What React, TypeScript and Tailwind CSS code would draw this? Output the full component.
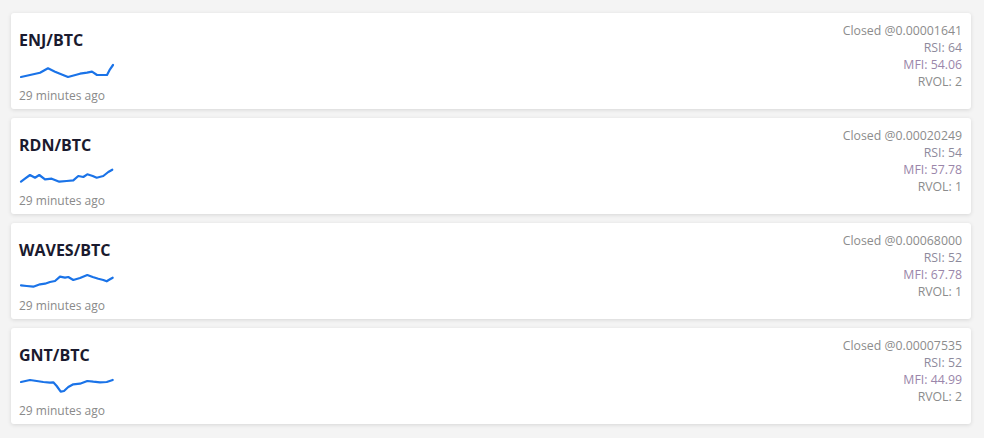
import React from "react";

type Item = {
  pair: string;
  closed: string;
  rsi: string;
  mfi: string;
  rvol: string;
  points: [number, number][];
};

const items: Item[] = [
  {
    pair: "ENJ/BTC",
    closed: "0.00001641",
    rsi: "64",
    mfi: "54.06",
    rvol: "2",
    points: [
      [2, 18], [11, 16], [21, 13.7], [29, 9.3], [36, 12.7], [49, 18], [61, 14.7],
      [68, 13.7], [73, 12.7], [78, 16], [84, 16], [88, 16], [91, 10.3], [94, 6],
    ],
  },
  {
    pair: "RDN/BTC",
    closed: "0.00020249",
    rsi: "54",
    mfi: "57.78",
    rvol: "1",
    points: [
      [2, 17.7], [6, 14.7], [11, 11], [16, 13.7], [20.3, 11], [26, 15.3], [32.7, 14.7],
      [40.3, 17.7], [47.7, 17], [54.3, 16.3], [59.3, 12], [64.3, 13], [68.3, 10.3],
      [73.7, 12], [77.7, 13.7], [84.3, 12], [89.3, 8], [93.3, 5.7],
    ],
  },
  {
    pair: "WAVES/BTC",
    closed: "0.00068000",
    rsi: "52",
    mfi: "67.78",
    rvol: "1",
    points: [
      [2, 16.3], [7.7, 17], [14.3, 17.7], [21, 15.3], [26, 14.7], [31, 13], [36, 12],
      [41, 7.7], [46, 8.7], [49.3, 8], [54.3, 11], [61, 9], [68.3, 6], [73.7, 8],
      [79.3, 9.7], [84.3, 11], [87.7, 12.3], [91, 10.3], [93.7, 8.7],
    ],
  },
  {
    pair: "GNT/BTC",
    closed: "0.00007535",
    rsi: "52",
    mfi: "44.99",
    rvol: "2",
    points: [
      [2, 8], [11, 6], [17.7, 7], [24.3, 8], [31, 8.7], [34.3, 8.3], [37.7, 12],
      [41.7, 17.7], [45, 17], [49.3, 13], [54.3, 10.3], [61, 9.7], [68.3, 7],
      [74.3, 7.7], [81, 8.3], [87.7, 8], [93.7, 6],
    ],
  },
];

function Spark({ points }: { points: [number, number][] }) {
  return (
    <svg width="96" height="22" viewBox="0 0 96 22" className="block">
      <polyline
        points={points.map((p) => p.join(",")).join(" ")}
        fill="none"
        stroke="#1a73e8"
        strokeWidth="2.2"
        strokeLinejoin="round"
        strokeLinecap="round"
      />
    </svg>
  );
}

export default function App() {
  return (
    <div
      className="min-h-[438px] bg-[#f4f4f4] pt-[13px] pl-[11px] pr-[13px] pb-[14px]"
      style={{ fontFamily: '"Open Sans", "Noto Sans", sans-serif' }}
    >
      <div className="flex flex-col gap-[9px]">
        {items.map((it) => (
          <div
            key={it.pair}
            className="flex h-[96px] justify-between rounded-[3px] bg-white pl-[8px] pr-[9px] pt-[9px] shadow-[0_1px_4px_rgba(0,0,0,0.12)]"
          >
            <div className="mt-[8px] flex flex-col">
              <div className="text-[16px] font-bold leading-[20px] text-[#1a1a2e]">{it.pair}</div>
              <div className="mt-[9px]">
                <Spark points={it.points} />
              </div>
              <div className="mt-[7px] text-[12px] leading-[16px] text-[#8a8a8a]">29 minutes ago</div>
            </div>
            <div className="flex flex-col items-end text-[12.3px] leading-[17px] text-[#8c8c8c]">
              <div>Closed @{it.closed}</div>
              <div className="text-[#8e8a9c]">RSI: {it.rsi}</div>
              <div className="text-[#9a86aa]">MFI: {it.mfi}</div>
              <div>RVOL: {it.rvol}</div>
            </div>
          </div>
        ))}
      </div>
    </div>
  );
}
